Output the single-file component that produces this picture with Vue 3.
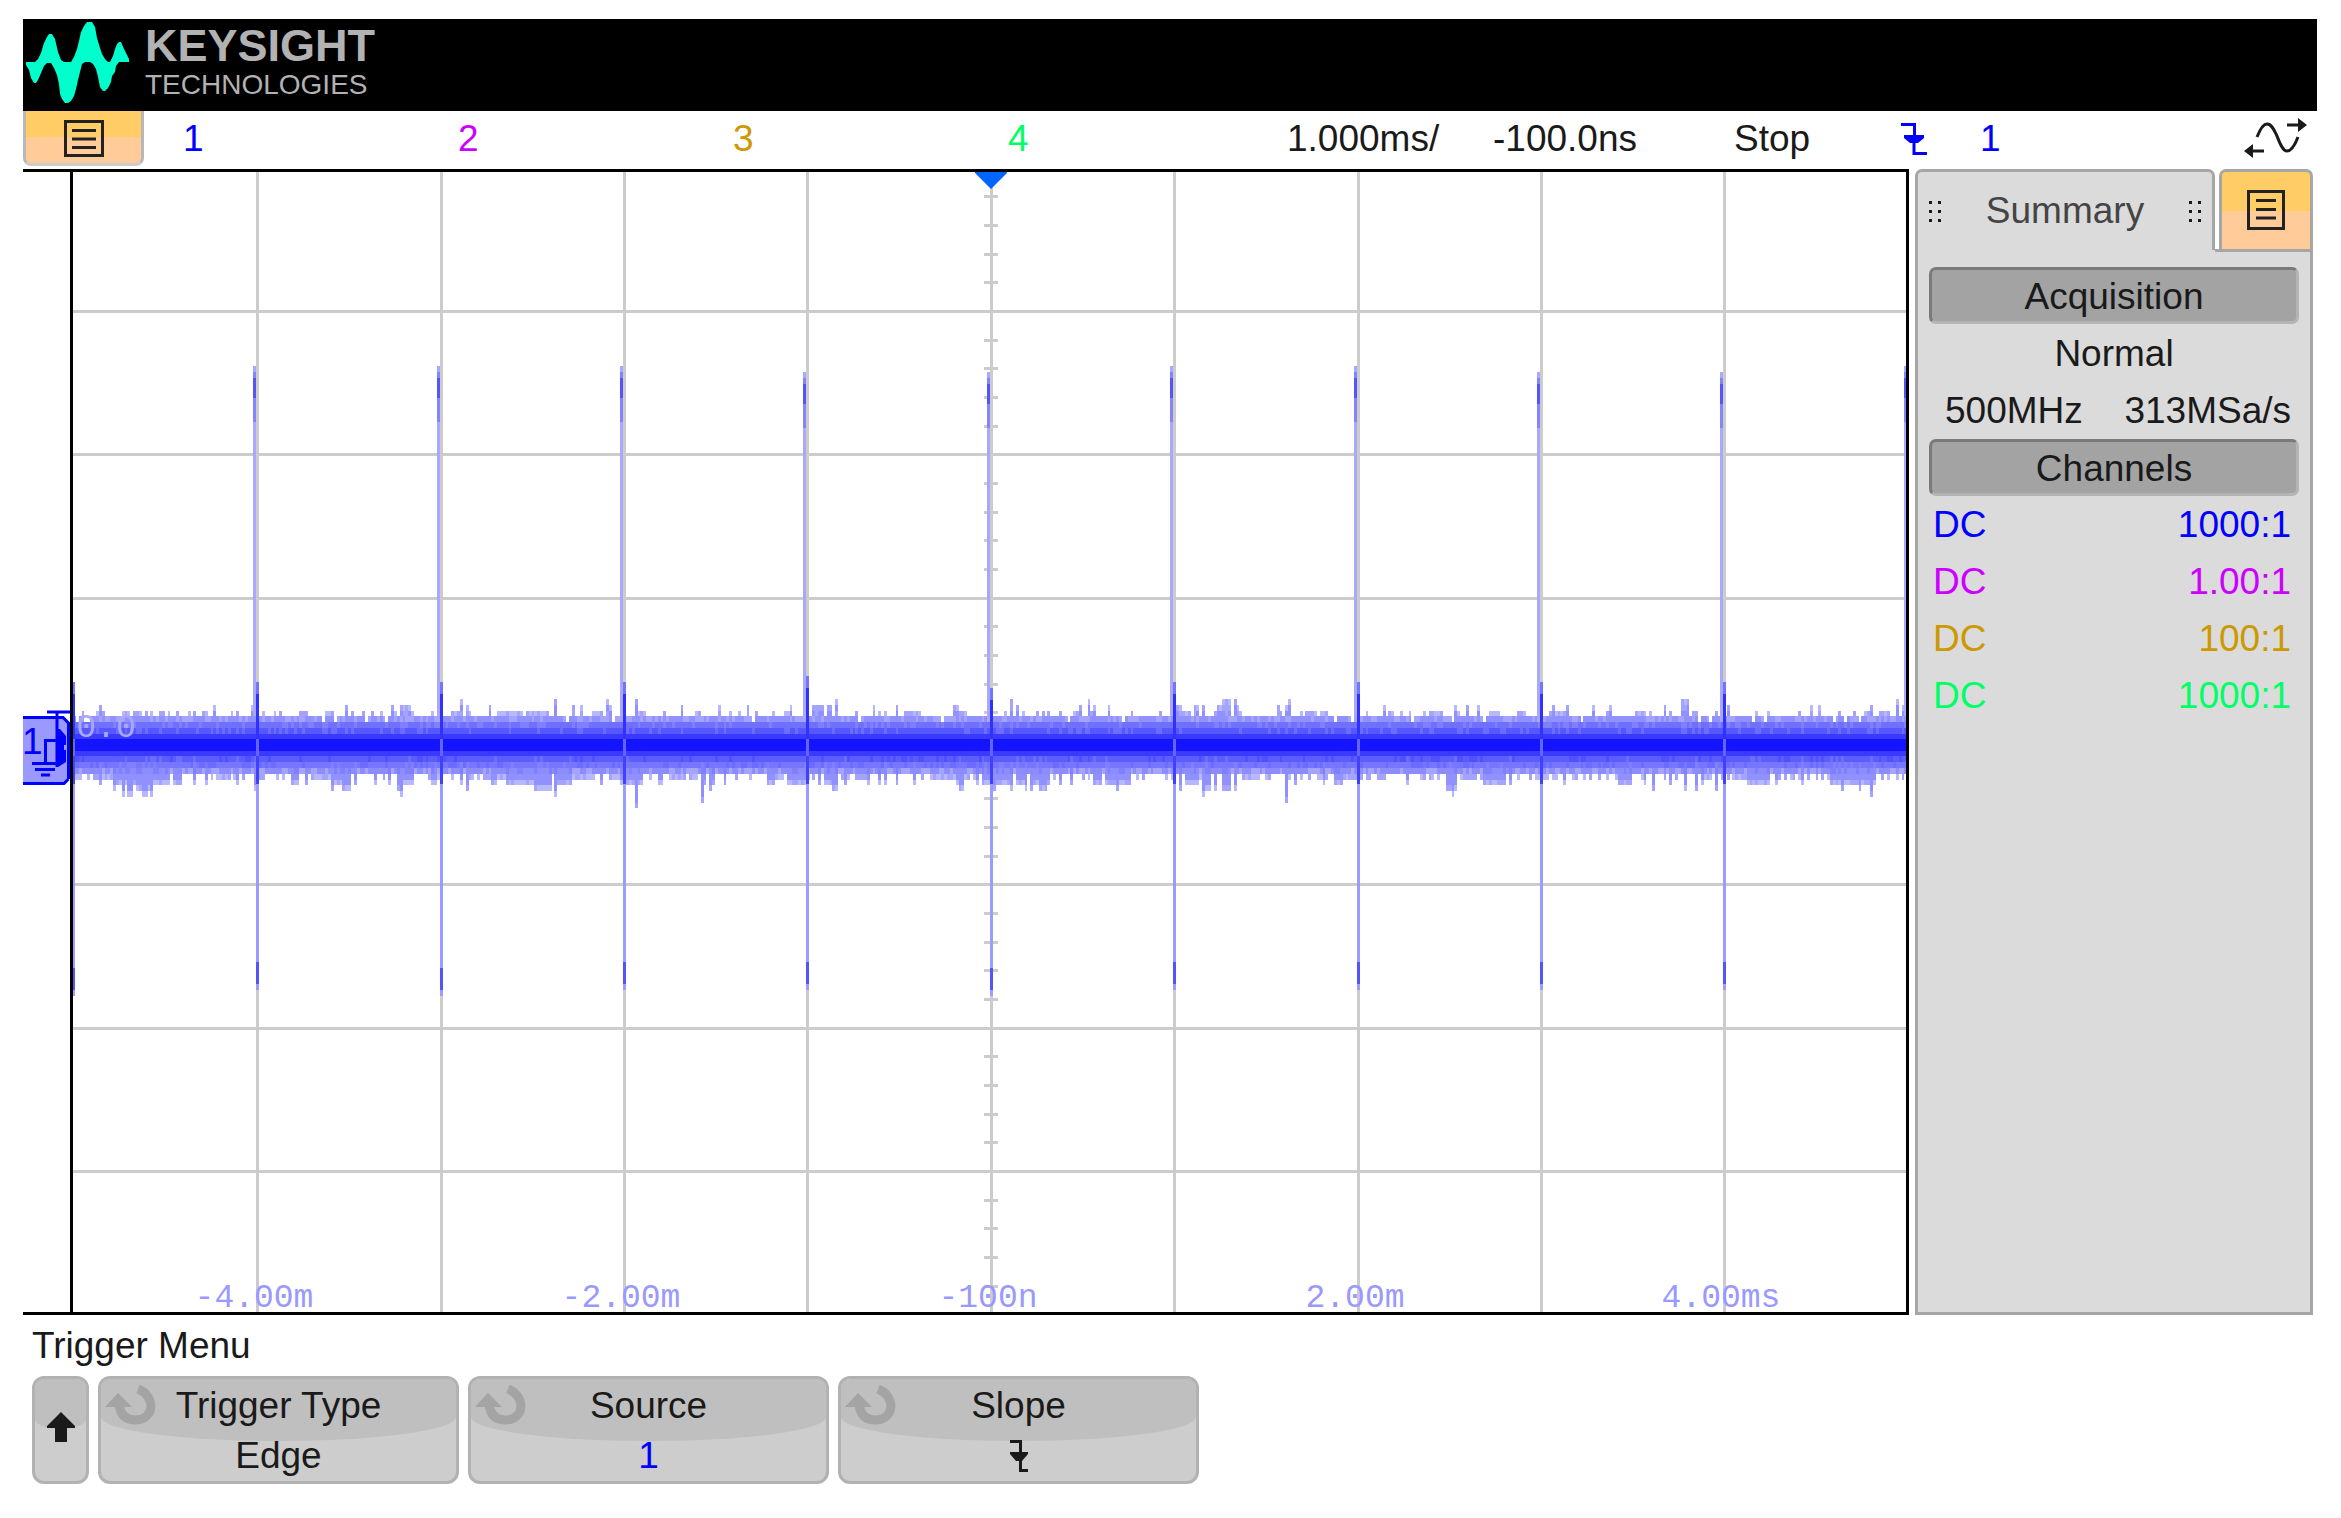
<script setup>
const channels = [
  { id: 1, name: '1', color: '#0000ff', coupling: 'DC', probe: '1000:1' },
  { id: 2, name: '2', color: '#cc00ff', coupling: 'DC', probe: '1.00:1' },
  { id: 3, name: '3', color: '#cc9900', coupling: 'DC', probe: '100:1' },
  { id: 4, name: '4', color: '#00ff66', coupling: 'DC', probe: '1000:1' },
]

const softkeys = [
  { label: 'Trigger Type', value: 'Edge' },
  { label: 'Source', value: '1', accent: true },
  { label: 'Slope', icon: true },
]

// Graticule
const LEFT = 73
const DIV_X = 183.4
const DIV_Y = 143.3
const CENTER_Y = 741
const gridX = Array.from({ length: 9 }, (_, i) => Math.round(257.2 + i * DIV_X))
const gridY = [-3, -2, -1, 0, 1, 2, 3].map((n) => Math.round(CENTER_Y + n * DIV_Y))
const ticks = []
for (let n = -19; n <= 19; n++) {
  if (n % 5) ticks.push(Math.round(CENTER_Y + (n * DIV_Y) / 5))
}
const axisLabels = [
  { x: 254, text: '-4.00m' },
  { x: 621, text: '-2.00m' },
  { x: 988, text: '-100n' },
  { x: 1355, text: '2.00m' },
  { x: 1721, text: '4.00ms' },
]

// Noise envelope: "from-to:level" in plot units, one level is two display rows
const CELL = 2.866
const ROW = CELL * 2
const COLS = 640
const upper =
  '82:2 99:3 97-102:2 124-130:2 135-140:2 145:2 153:2 160-164:2 170:2 178:2 190:2 196:2 202:2 207:2 214:3 232:2 238:2 251:3 263:2 275:2 280:2 300-307:2 326-333:2 346:3 353:2 363:2 373:2 380:2 392:3 396:2 402-410:3 414:2 434:2 454-460:2 461:4 466:3 471:2 489:3 500-505:2 508-522:2 528-533:2 537-548:2 555:4 572:3 581:3 594-601:2 607:4 610:3 635:4 638-644:2 664:2 681:3 696:2 700:2 718:3 732:2 738:2 749:3 756:2 773:2 785-788:2 790:3 813:3 818-823:3 829-832:3 838:4 858:2 873:3 879:2 886:2 896:3 906-920:2 954-957:3 958-966:2 1005:2 1013:4 1016:3 1022:2 1036:2 1042:2 1048:2 1059:2 1074-1079:2 1080:3 1088:4 1093:2 1096:3 1108:3 1133:2 1162:2 1175-1180:3 1183-1188:2 1194-1197:3 1205:3 1214:2 1217:3 1220-1224:3 1225-1228:4 1230:3 1234:4 1238:3 1242:2 1277:3 1280:2 1286:2 1288:3 1291:4 1300:2 1308-1315:2 1320-1326:2 1368:2 1383:3 1389:2 1394:2 1400:2 1409:2 1424:2 1431-1442:2 1457:3 1460:2 1466:3 1480:3 1489-1498:2 1520-1524:2 1543:3 1549:2 1552:3 1557-1568:2 1569:3 1592:3 1607:2 1612:3 1635-1645:2 1652:2 1664:3 1672:2 1683-1687:4 1693:2 1698:2 1718:2 1727:3 1756:2 1767:2 1799:2 1810:3 1819:3 1839:2 1853:2 1870:3 1867-1869:2 1880-1890:2 1896:4 1902:3 1905:3'
const lower =
  '75:1 96-112:1 99:2 114:3 117-165:2 122:4 128-132:4 138-152:3 143-146:4 151:4 170:2 176-180:2 196:2 205:2 221-228:1 237:2 243:1 255:3 279:1 293-298:2 307:2 314-326:1 331:3 335-342:2 345-349:3 355:2 375:2 391:2 399:3 401:4 404-414:2 432-436:2 454:1 461:2 466:3 470:1 487:1 492-497:2 508-535:2 537-550:3 555:4 558-570:2 571-593:1 601:2 611-621:1 622-642:2 650:1 658-663:2 635:6 670-685:1 690-697:1 701:5 706:2 710:3 714:2 724:2 750:1 768-773:2 775-782:1 787-806:2 814:1 819:2 826-830:2 833:3 838:3 844:2 857-866:1 867:2 880:2 885:2 898:2 915:2 922:1 932-952:1 957-959:2 960-963:3 970:1 976:2 983-990:2 993:3 997-1012:2 1013:3 1016-1022:2 1025:3 1031:3 1034-1040:2 1041-1046:3 1050:2 1060:2 1071:2 1083:1 1090:1 1096-1100:2 1107-1125:2 1119:3 1128:2 1143:1 1165:1 1175:2 1180:3 1187-1198:2 1203-1208:3 1205:4 1214:3 1225-1230:3 1236:3 1243-1255:1 1258:1 1267:1 1286:5 1294:2 1300:1 1310:1 1323:2 1335-1340:2 1343-1355:1 1370:1 1380:1 1406:2 1423:1 1434:1 1446-1456:3 1452:4 1462-1475:1 1485-1505:2 1510:2 1520:1 1530:1 1555:1 1566:2 1575:1 1590:1 1598:1 1618-1632:2 1645:2 1653:3 1671:2 1684:3 1698:3 1702:2 1709:1 1718:3 1735-1746:1 1748-1768:2 1776:2 1780:1 1802:2 1808:1 1816:1 1822:1 1832-1870:2 1842:3 1859:3 1870:4 1873:2 1888:1 1898:1'

let seed = 9173
const rand = () => {
  seed = (seed * 48271) % 2147483647
  return seed / 2147483647
}

function envelope(base, source) {
  const levels = base.slice()
  for (const entry of source.split(' ')) {
    const [range, level] = entry.split(':')
    const [from, to = from] = range.split('-').map(Number)
    const a = Math.max(0, Math.floor((from - LEFT) / CELL))
    const b = Math.min(COLS - 1, Math.floor((to - LEFT) / CELL))
    for (let c = a; c <= b; c++) levels[c] = Math.max(levels[c], Number(level))
  }
  return levels
}

const topLevels = envelope(Array.from({ length: COLS }, () => (rand() < 0.06 ? 0 : 1)), upper)
const bottomLevels = envelope(Array.from({ length: COLS }, () => (rand() < 0.22 ? 1 : 0)), lower)

const shades = { '#b8b8ff': '', '#a4a4ff': '', '#9090ff': '', '#8080ff': '', '#6c6cff': '', '#5050ff': '' }
const cell = (shade, col, y) => {
  const x0 = Math.round(LEFT + col * CELL)
  const x1 = Math.round(LEFT + (col + 1) * CELL)
  const y0 = Math.round(y)
  shades[shade] += `M${x0} ${y0}H${x1}V${Math.round(y + ROW)}H${x0}z`
}
for (let c = 0; c < COLS; c++) {
  for (let k = 1; k <= topLevels[c]; k++) {
    const last = k === topLevels[c]
    if (last && k > 1) cell(rand() < 0.5 ? '#b8b8ff' : '#a4a4ff', c, 722 - k * ROW)
    else cell(rand() < 0.65 ? '#9090ff' : '#a4a4ff', c, 722 - k * ROW)
  }
  for (let k = 1; k <= bottomLevels[c]; k++) {
    const last = k === bottomLevels[c]
    cell(last ? (rand() < 0.5 ? '#b8b8ff' : '#a4a4ff') : '#9090ff', c, 774 + (k - 1) * ROW)
  }
  const deep = bottomLevels[c] > 1
  if (rand() < 0.25) cell('#8080ff', c, 722)
  if (rand() < 0.2) cell('#6c6cff', c, 728)
  if (rand() < 0.4) cell(deep ? '#8080ff' : '#a4a4ff', c, 768)
  if (rand() < 0.3) cell(deep ? '#8080ff' : '#6c6cff', c, 762)
  if (rand() < 0.2) cell(deep ? '#6c6cff' : '#5050ff', c, 756)
}

const bands = [
  { y: 722, h: 6, fill: '#7070ff' },
  { y: 728, h: 6, fill: '#5757ff' },
  { y: 734, h: 5, fill: '#3a3aff' },
  { y: 739, h: 12, fill: '#1414ff' },
  { y: 751, h: 5, fill: '#3a3aff' },
  { y: 756, h: 6, fill: '#5c5cff' },
  { y: 762, h: 6, fill: '#7676ff' },
  { y: 768, h: 6, fill: '#8c8cff' },
]

const risePulses = [366, 366, 366, 372, 372, 366, 366, 372, 372].map((top, i) => ({ x: gridX[i] - 4, top }))
risePulses.push({ x: 1904, top: 366 })
const fallPulses = [
  { x: 72, top: 682, bottom: 996 },
  ...[990, 996, 990, 990, 996, 990, 990, 990, 990].map((bottom, i) => ({
    x: gridX[i] - 1,
    top: i === 4 ? 688 : i === 3 ? 676 : 682,
    bottom,
  })),
]
</script>

<template>
  <div class="scope">
    <header class="brand">
      <svg class="brand-mark" viewBox="0 0 104 82" aria-hidden="true">
        <path
          fill="#00ffcc"
          d="M0 40H9L12 37L15 31L18 21L21 15L23 12H26L29 17L32 30L35 38L38 40H45L48 35L51 27L53 19L55 10L58 4L61 0H66L69 5L71 16L74 26L76 32L79 37L82 40H84L87 34L89 27L91 22L93 20H95L98 27L101 33L103 37V40H93L90 44L89 50L86 54L85 60L82 66L79 69H77L74 65L72 55L70 47L67 42L64 40H59L56 42L54 50L52 58L50 67L48 74L45 79L42 81H39L36 77L34 72L33 62L31 53L28 46L25 41H21L18 44L15 51L12 58L10 61H8L5 56L3 48L0 43z"
        />
      </svg>
      <div class="brand-text">
        <span class="brand-name">KEYSIGHT</span>
        <span class="brand-sub">TECHNOLOGIES</span>
      </div>
    </header>

    <div class="status">
      <button class="menu-button main-menu" type="button" aria-label="Main menu">
        <svg viewBox="0 0 40 38" aria-hidden="true">
          <path fill="none" stroke="#222" stroke-width="3" d="M1.5 1.5H38.500V35.500H1.500zM8 10.500H32M8 19H32M8 27.500H32" />
        </svg>
      </button>
      <span v-for="ch in channels" :key="ch.id" :style="{ color: ch.color }">{{ ch.name }}</span>
      <span>1.000ms/</span>
      <span>-100.0ns</span>
      <span>Stop</span>
      <svg class="edge-icon" viewBox="0 0 26 32" role="img" aria-label="Falling edge">
        <path fill="none" stroke="#00f" stroke-width="3" d="M0 1.500H13.500V14M13 14V30.500H26" />
        <path fill="#00f" d="M3 12H23V15L17 20H9L3 15z" />
      </svg>
      <span class="accent">1</span>
      <svg class="auto-icon" viewBox="0 0 64 42" role="img" aria-label="Auto scale">
        <path fill="none" stroke="#1a1a1a" stroke-width="3" d="M13 20C17 10 20 7 23 7C28 7 30 13 33 19C36 27 39 34 43 34C47 34 51 28 54 20M43 8H58M6 34H20" />
        <path fill="#1a1a1a" d="M54 1L63 8L54 15zM9 27L0 34L9 41z" />
      </svg>
    </div>

    <main class="work">
      <svg class="plot" viewBox="23 168 1886 1147" role="img" aria-label="Waveform display">
        <g fill="#cccccc" shape-rendering="crispEdges">
          <rect v-for="x in gridX" :key="'x' + x" :x="x - 1" y="171" width="3" height="1142" />
          <rect v-for="y in gridY" :key="'y' + y" x="72" :y="y - 1" width="1834" height="3" />
          <rect v-for="y in ticks" :key="'t' + y" x="984" :y="y - 1" width="14" height="3" />
        </g>
        <path fill="#0066ff" d="M975 171H1007V173L991 189L975 173z" />

        <g class="axis">
          <text v-for="l in axisLabels" :key="l.text" :x="l.x" y="1307" text-anchor="middle">{{ l.text }}</text>
        </g>

        <g shape-rendering="crispEdges">
          <rect v-for="b in bands" :key="b.y" x="73" :y="b.y" width="1833" :height="b.h" :fill="b.fill" />
          <path v-for="(d, shade) in shades" :key="shade" :fill="shade" :d="d" />
          <g v-for="p in risePulses" :key="'r' + p.x">
            <rect :x="p.x" :y="p.top" width="3" height="350" fill="#a8a8ff" />
            <rect :x="p.x" :y="p.top + 6" width="3" height="50" fill="#8484ff" />
            <rect :x="p.x" :y="p.top + 12" width="3" height="20" fill="#5454ff" />
          </g>
          <g v-for="p in fallPulses" :key="'f' + p.x">
            <rect :x="p.x" :y="p.top" width="3" :height="p.bottom - p.top" fill="#9c9cff" />
            <rect :x="p.x" :y="p.top" width="3" height="12" fill="#7474ff" />
            <rect :x="p.x" :y="p.top + 12" width="3" :height="727 - p.top" fill="#3030ff" />
            <rect :x="p.x" y="739" width="3" height="17" fill="#6464ff" />
            <rect :x="p.x" y="756" width="3" height="28" fill="#4040ff" />
            <rect :x="p.x" :y="p.bottom - 28" width="3" height="22" fill="#5454ff" />
          </g>
        </g>
        <g fill="none" stroke="#000" stroke-width="3" shape-rendering="crispEdges">
          <path d="M23 170.500H1909M23 1313.500H1909M71.500 169V1315M1907.500 169V1315" />
        </g>

        <text class="axis level" x="106" y="737" text-anchor="middle">0.0</text>

        <path fill="#9999ff" d="M23 717H63L68 722V779L64 784H23z" />
        <path fill="none" stroke="#00f" stroke-width="3" d="M23 717.500H63L68.500 723M23 783.500H64L68.500 779" />
        <path fill="#00f" d="M67 722H70V779H67z" />
        <path fill="#00f" d="M56 729H60L66 736V762L58 767H56z" />
        <path fill="none" stroke="#00f" stroke-width="3" d="M47 712H70M57 712V767M57 740.500H45.500V763M32 763.500H57M35 769.500H55M41 775H50" />
        <path fill="#9999ff" d="M64 745H67V750H64z" />
        <text class="marker" x="22" y="754">1</text>
      </svg>

      <aside class="panel">
        <div class="panel-head">
          <h2 class="tab">
            <svg class="grip" viewBox="0 0 12 21" aria-hidden="true">
              <path fill="#1a1a1a" d="M0 0h3v3H0zM9 0h3v3H9zM0 9h3v3H0zM9 9h3v3H9zM0 18h3v3H0zM9 18h3v3H9z" />
            </svg>
            <span>Summary</span>
            <svg class="grip" viewBox="0 0 12 21" aria-hidden="true">
              <path fill="#1a1a1a" d="M0 0h3v3H0zM9 0h3v3H9zM0 9h3v3H0zM9 9h3v3H9zM0 18h3v3H0zM9 18h3v3H9z" />
            </svg>
          </h2>
          <div class="panel-menu">
            <button class="menu-button side-menu" type="button" aria-label="Panel menu">
              <svg viewBox="0 0 38 40" aria-hidden="true">
                <path fill="none" stroke="#222" stroke-width="3" d="M1.500 1.500H36.500V38.500H1.500zM9 10.500H29M9 19.500H29M9 28H29" />
              </svg>
            </button>
          </div>
        </div>
        <div class="panel-body">
          <h3 class="section">Acquisition</h3>
          <p class="row center">Normal</p>
          <p class="row rates"><span>500MHz</span><span>313MSa/s</span></p>
          <h3 class="section">Channels</h3>
          <table class="channels">
            <tbody>
              <tr v-for="ch in channels" :key="ch.id" :style="{ color: ch.color }">
                <td>{{ ch.coupling }}</td>
                <td class="probe">{{ ch.probe }}</td>
              </tr>
            </tbody>
          </table>
        </div>
      </aside>
    </main>

    <nav class="softmenu" aria-label="Trigger Menu">
      <h2 class="menu-title">Trigger Menu</h2>
      <div class="keys">
        <button class="key back" type="button" aria-label="Back">
          <svg viewBox="0 0 30 30" aria-hidden="true">
            <path fill="#1a1a1a" d="M15 0L29 14V16H21V30H9V16H1V14z" />
          </svg>
        </button>
        <button v-for="k in softkeys" :key="k.label" class="key" type="button">
          <svg class="knob" viewBox="0 0 52 42" aria-hidden="true">
            <path fill="none" stroke="#a4a4a4" stroke-width="9" d="M33 5C51 12 50 35 31 36C20 36 15 30 14 20" />
            <path fill="#a4a4a4" d="M13 9L27 23H0z" />
          </svg>
          <span class="key-line">{{ k.label }}</span>
          <span class="key-line" :class="{ accent: k.accent }">
            <svg v-if="k.icon" class="slope-icon" viewBox="0 0 18 32" role="img" aria-label="Falling edge">
              <path fill="none" stroke="#1a1a1a" stroke-width="3" d="M0 1.500H10.500V13M10.500 13V30.500H18" />
              <path fill="#1a1a1a" d="M0 12H18V14L12 21H6L0 14z" />
            </svg>
            <template v-else>{{ k.value }}</template>
          </span>
        </button>
      </div>
    </nav>
  </div>
</template>

<style>
body {
  margin: 0;
  background: #fff;
}
</style>

<style scoped>
.scope {
  padding: 19px 24px 34px 23px;
  font-family: "Liberation Sans", Arial, sans-serif;
  font-size: 37px;
  line-height: 42px;
  color: #1a1a1a;
}
h2,
h3,
p {
  margin: 0;
  font: inherit;
}
button {
  margin: 0;
  padding: 0;
  font: inherit;
  color: inherit;
}
svg {
  display: block;
}

.brand {
  display: flex;
  align-items: flex-start;
  gap: 15px;
  padding: 3px 3px 7px;
  background: #000;
  color: #b2b2b2;
}
.brand-mark {
  width: 104px;
  height: 82px;
}
.brand-text {
  display: flex;
  flex-direction: column;
}
.brand-name {
  padding-top: 2px;
  font-size: 45px;
  font-weight: 700;
  line-height: 44px;
}
.brand-sub {
  font-size: 28px;
  line-height: 34px;
}

.status {
  display: grid;
  grid-template-columns:
    minmax(0, 160fr) minmax(0, 275fr) minmax(0, 275fr) minmax(0, 275fr) minmax(0, 279fr)
    minmax(0, 206fr) minmax(0, 241fr) minmax(0, 167fr) minmax(0, 79fr) minmax(0, 264fr) minmax(0, 73fr);
  height: 57px;
  line-height: 56px;
  white-space: nowrap;
}
.menu-button {
  display: flex;
  justify-content: center;
  background: linear-gradient(#ffcc66 50%, #ffcc99 50%);
}
.main-menu {
  width: 121px;
  height: 55px;
  padding-top: 9px;
  border: 3px solid #b8b8b8;
  border-top: 0;
  border-bottom-color: #cccccc;
  border-radius: 0 0 8px 8px;
}
.main-menu svg {
  width: 40px;
  height: 38px;
}
.edge-icon {
  width: 26px;
  height: 32px;
  margin-top: 12px;
}
.auto-icon {
  width: 64px;
  height: 42px;
  margin-top: 6px;
}

.work {
  display: grid;
  grid-template-columns: minmax(0, 1886fr) minmax(0, 398fr);
  gap: 6px;
  padding-right: 4px;
}
.plot {
  width: 100%;
  height: auto;
  overflow: visible;
}
.axis {
  font-family: "Liberation Mono", monospace;
  font-size: 33px;
  fill: #9999ff;
}
.level {
  fill: #a8a8ff;
}
.marker {
  font-size: 37px;
  fill: #0000ff;
}

.panel {
  display: flex;
  flex-direction: column;
  margin-top: 1px;
}
.panel-head {
  position: relative;
  z-index: 1;
  display: flex;
}
.tab {
  flex: 1;
  display: flex;
  justify-content: space-between;
  align-items: center;
  height: 81px;
  padding: 0 11px;
  border: 3px solid #a6a6a6;
  border-bottom: 0;
  border-radius: 7px 7px 0 0;
  box-sizing: border-box;
  background: #dbdbdb;
  color: #444;
}
.grip {
  width: 12px;
  height: 21px;
}
.panel-menu {
  height: 80px;
  padding-left: 4px;
  border-bottom: 3px solid #a6a6a6;
}
.side-menu {
  width: 94px;
  height: 80px;
  padding-top: 18px;
  border: 3px solid #a6a6a6;
  border-bottom: 0;
  border-radius: 7px 7px 0 0;
}
.side-menu svg {
  width: 38px;
  height: 40px;
}
.panel-body {
  flex: 1;
  margin-top: -2px;
  padding: 16px 11px 0;
  border: solid #a6a6a6;
  border-width: 0 3px 3px;
  background: #dbdbdb;
}
.section {
  height: 51px;
  margin: 1px 0 0;
  border: 3px solid #7a7a7a;
  border-right-color: #b4b4b4;
  border-bottom-color: #b4b4b4;
  border-radius: 7px;
  background: #a3a3a3;
  line-height: 54px;
  text-align: center;
}
.row {
  height: 57px;
  line-height: 59px;
}
.center {
  text-align: center;
}
.rates {
  display: flex;
  justify-content: space-between;
  padding: 0 8px 0 16px;
}
.channels {
  width: 100%;
  border-collapse: collapse;
}
.channels td {
  height: 57px;
  padding: 1px 8px 0 4px;
  box-sizing: border-box;
  line-height: 56px;
}
.channels .probe {
  text-align: right;
}

.softmenu {
  padding: 10px 0 0 9px;
}
.menu-title {
  padding-bottom: 9px;
}
.keys {
  display: flex;
  gap: 9px;
}
.key {
  position: relative;
  display: flex;
  flex-direction: column;
  align-items: center;
  flex: 0 1 361px;
  height: 108px;
  padding-top: 2px;
  border: 3px solid #b2b2b2;
  border-radius: 12px;
  box-sizing: border-box;
  overflow: hidden;
  background: #cdcdcd;
}
.key::before {
  content: "";
  position: absolute;
  top: 0;
  left: 0;
  right: 0;
  height: 62px;
  border-radius: 0 0 50% 50% / 0 0 24px 24px;
  background: #bfbfbf;
}
.back {
  flex: 0 0 57px;
  justify-content: center;
  padding: 0 0 6px;
}
.back::before {
  height: 50px;
  border-radius: 0 0 50% 50% / 0 0 10px 10px;
}
.back svg {
  position: relative;
  width: 30px;
  height: 30px;
}
.knob {
  position: absolute;
  top: 5px;
  left: 4px;
  width: 52px;
  height: 42px;
}
.key-line {
  position: relative;
  display: flex;
  align-items: center;
  height: 52px;
}
.accent {
  color: #0000ff;
}
.slope-icon {
  width: 18px;
  height: 32px;
}
</style>
